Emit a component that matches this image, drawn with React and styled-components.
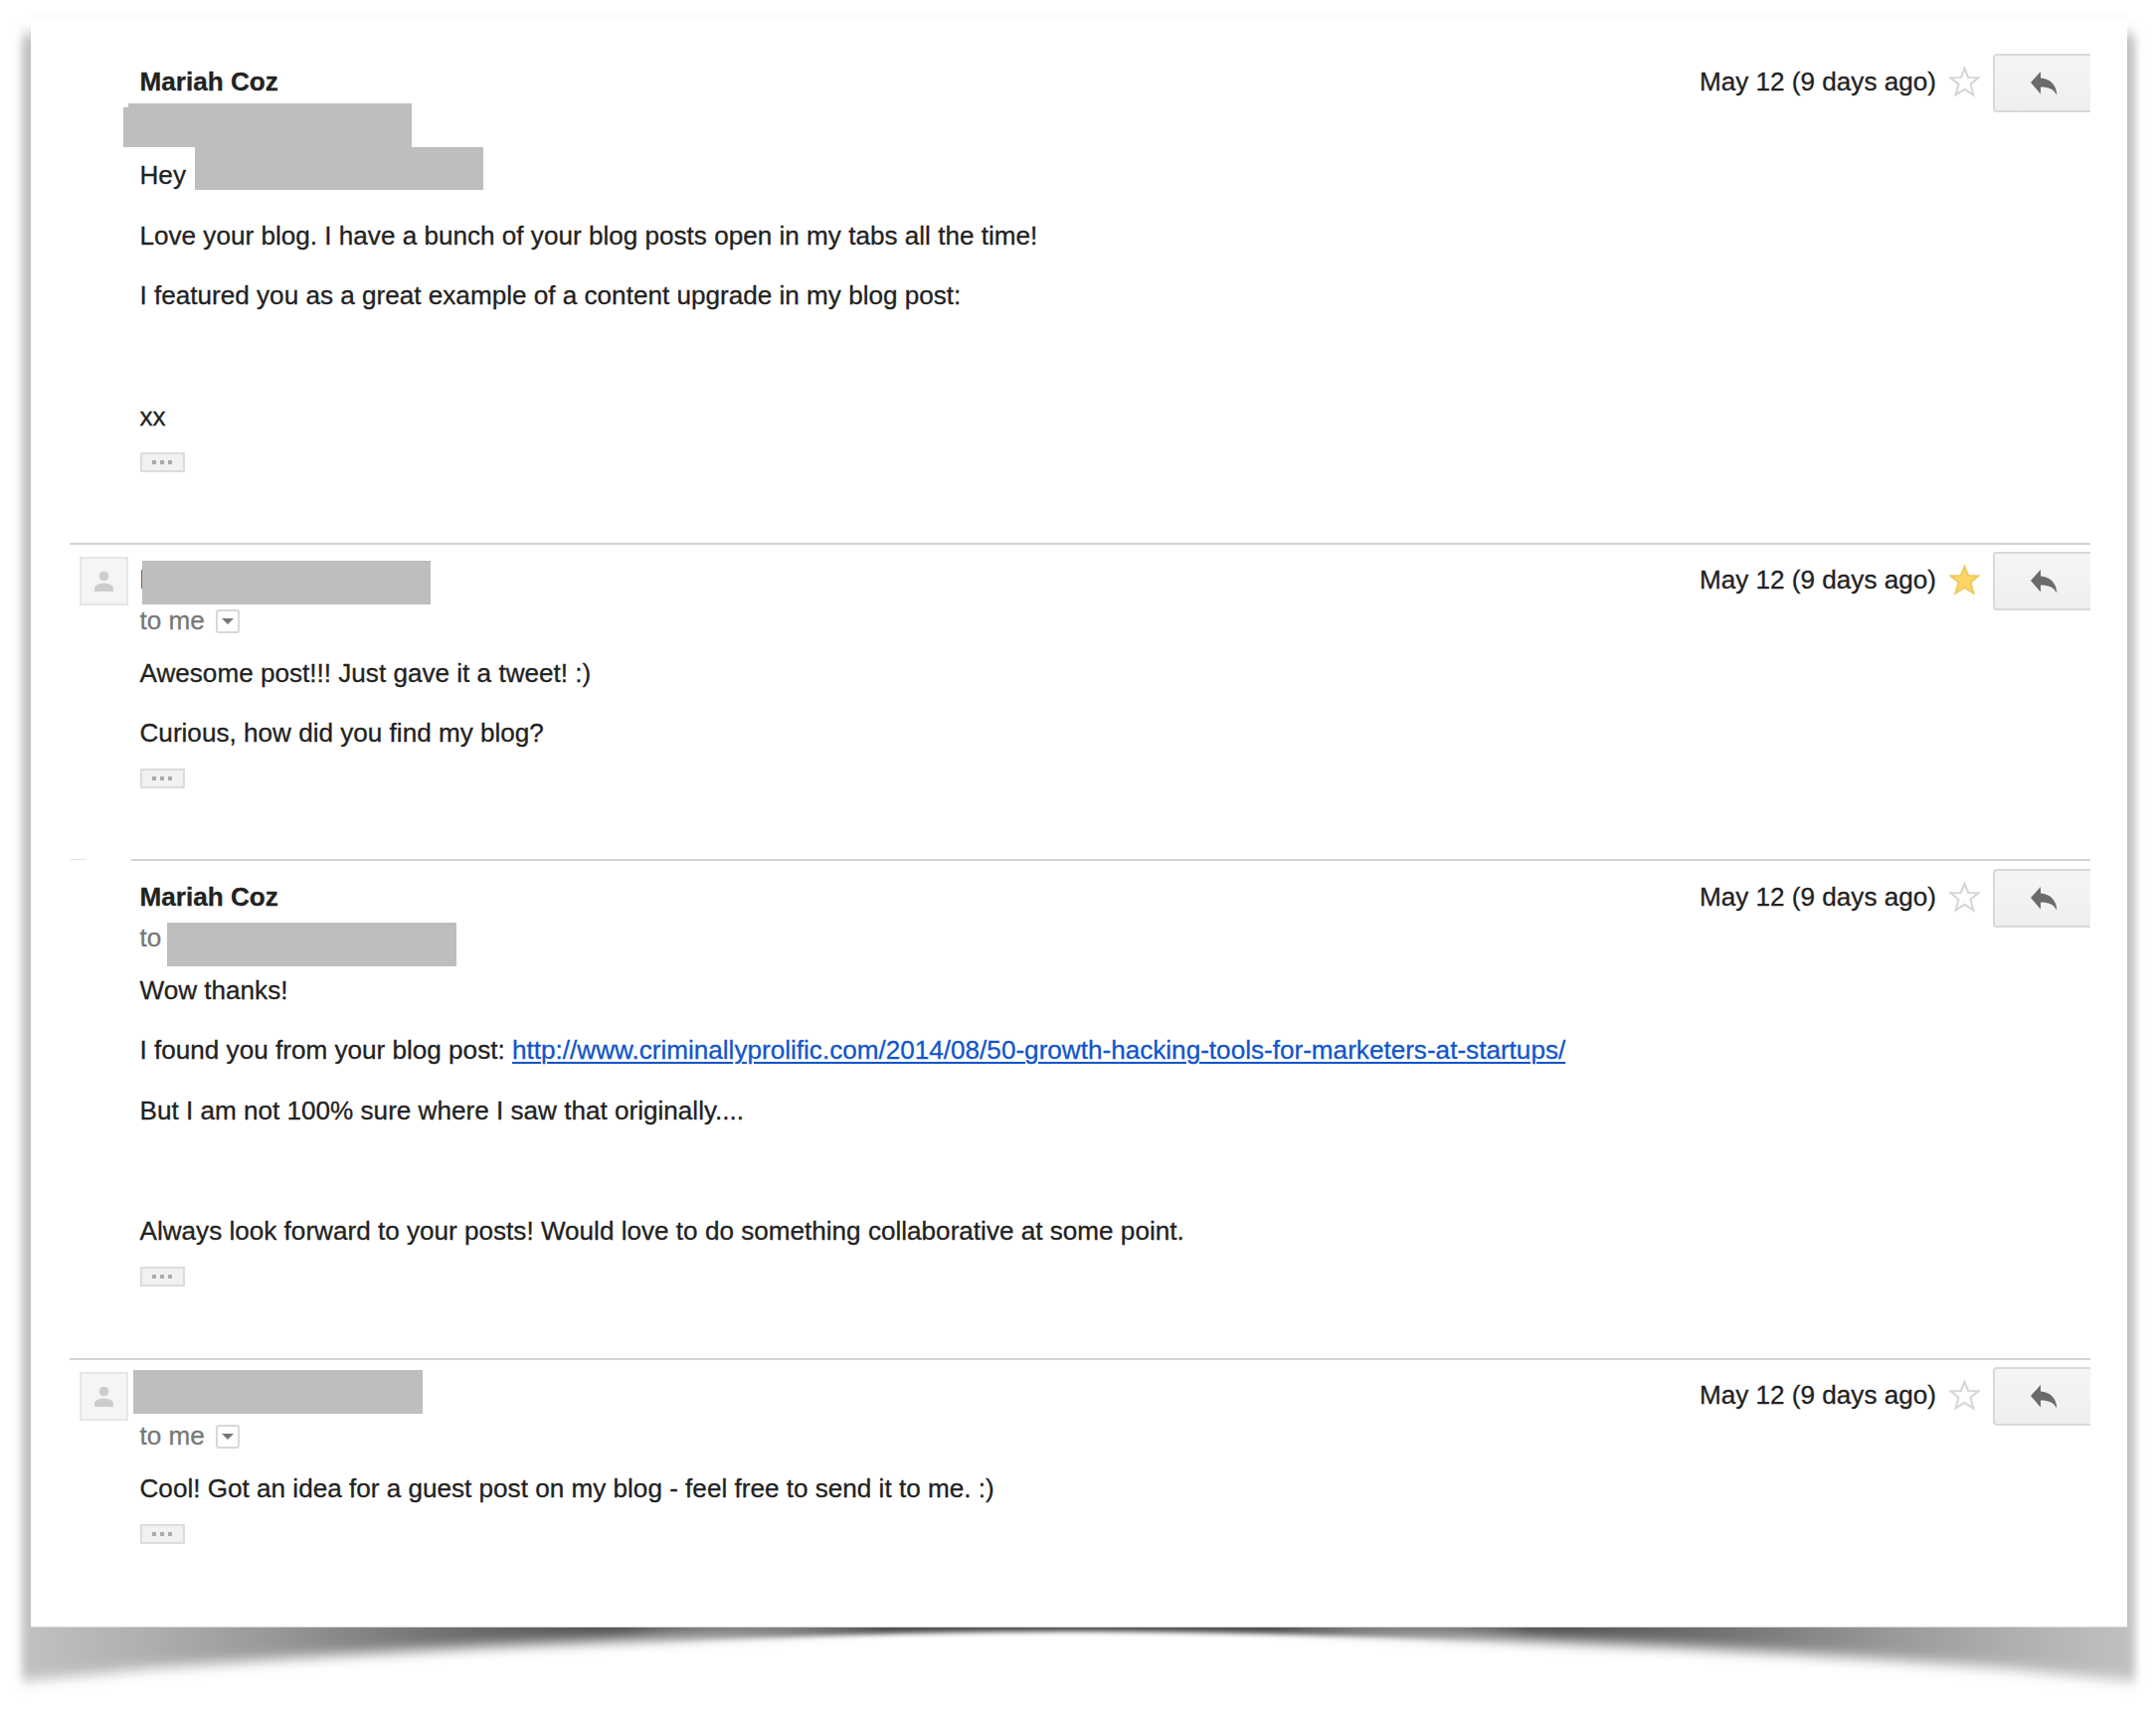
import React from 'react'
import styled, { createGlobalStyle } from 'styled-components'

const GlobalStyle = createGlobalStyle`
  body {
    margin: 0;
    background: #fff;
    font-family: "Liberation Sans", Arial, sans-serif;
    font-size: 26.11px;
    line-height: 30px;
    color: #222;
    -webkit-text-stroke: 0.3px;
  }
`

const Page = styled.div`
  position: relative;
  box-sizing: border-box;
  width: 2168px;
  height: 1724px;
  padding: 13px 29px 0 31px;
  overflow: hidden;
`

const PaperShadow = styled.svg`
  position: absolute;
  top: 0;
  left: 0;
`

const Paper = styled.main`
  position: relative;
  box-sizing: border-box;
  height: 1624px;
  padding: 32px 37px 0 39px;
  border-bottom: 1px solid #d8d8d8;
  background: linear-gradient(#f9f9f9, #fff 8px);
`

const Message = styled.article`
  position: relative;
  display: grid;
  grid-template-columns: 71px 1fr auto;
  box-sizing: border-box;
  height: ${props => props.$height}px;
  padding-top: ${props => props.$shift || 0}px;
`

const Divider = styled.div`
  position: absolute;
  top: 0;
  left: ${props => props.$inset || 0}px;
  right: 0;
  height: 2px;
  background: #d3d3d3;
`

const DividerStub = styled.div`
  position: absolute;
  top: 0;
  left: 0;
  width: 17px;
  height: 1px;
  background: #e3e3e3;
`

const Avatar = styled.div`
  display: flex;
  align-items: center;
  justify-content: center;
  box-sizing: border-box;
  width: 49px;
  height: 49px;
  margin: 14px 0 0 10px;
  border: 2px solid #e6e6e6;
  background: #f5f5f5;
`

const Content = styled.div`
  padding-top: 22px;
  margin-left: -0.5px;
`

const Sender = styled.div`
  height: 41px;
  font-weight: bold;
`

const Recipient = styled.div`
  display: flex;
  align-items: center;
  gap: 11px;
  height: 30px;
  margin-bottom: ${props => props.$gap || 22.6}px;
  color: #777;
`

const Dropdown = styled.span`
  display: flex;
  align-items: center;
  justify-content: center;
  box-sizing: border-box;
  width: 24px;
  height: 24px;
  margin-top: 2px;
  border: 2px solid #d8d8d8;
  border-radius: 3px;
`

const Caret = styled.span`
  border: 6px solid transparent;
  border-top-color: #777;
  border-bottom: 0;
`

const Paragraph = styled.p`
  min-height: 30px;
  margin: 0 0 30.7px;
  white-space: nowrap;

  &:last-of-type {
    margin-bottom: 21px;
  }
`

const Link = styled.a`
  color: #15c;
  text-decoration: underline;
  text-decoration-thickness: 2px;
  text-underline-offset: 3px;
`

const Trimmed = styled.div`
  display: flex;
  align-items: center;
  justify-content: center;
  gap: 4px;
  box-sizing: border-box;
  width: 45px;
  height: 20px;
  border: 2px solid #dcdcdc;
  background: #f1f1f1;
`

const Dot = styled.span`
  width: 4px;
  height: 4px;
  background: #aaa;
`

const Meta = styled.div`
  display: flex;
  align-items: flex-start;
`

const SentDate = styled.span`
  padding-top: 22px;
  margin-right: 13px;
`

const StarIcon = styled.svg`
  margin: 21px 13px 0 0;
`

const ReplyButton = styled.div`
  display: flex;
  align-items: center;
  box-sizing: border-box;
  width: 98px;
  height: 59px;
  margin-top: 9px;
  padding-left: 36px;
  border: 2px solid #d9d9d9;
  border-right: 0;
  border-radius: 4px 0 0 4px;
  background: linear-gradient(#f5f5f5, #efefef);
`

const Redaction = styled.div`
  position: absolute;
  top: ${props => props.$top}px;
  left: ${props => props.$left}px;
  width: ${props => props.$width || 290}px;
  height: ${props => props.$height || 44}px;
  background: #bebebe;
`

const NameEdge = styled.div`
  position: absolute;
  top: 27px;
  left: 72px;
  width: 1px;
  height: 19px;
  background: #a85b20;
`

const Star = ({ filled }) => (
  <StarIcon width="31" height="32" viewBox="0 0 31 32">
    <path
      d="M15.500 3 L19.200 12 L29.200 12.300 L21.500 18.700 L24.400 29.500 L15.500 23.800 L6.600 29.500 L9.500 18.700 L1.800 12.300 L11.800 12 Z"
      fill={filled ? '#fdd663' : '#fff'}
      stroke={filled ? '#edca62' : '#d6d6d6'}
      strokeWidth="2.1"
    />
  </StarIcon>
)

const Reply = () => (
  <ReplyButton>
    <svg width="27" height="24" viewBox="0 0 27 24">
      <path d="M0 11 L10 0 V6.500 C19 7 26 13 26.300 23.500 C23 17.500 18 15.500 10 15.500 V22.500 Z" fill="#6b6b6b" />
    </svg>
  </ReplyButton>
)

const Person = () => (
  <Avatar>
    <svg width="20" height="22" viewBox="0 0 20 22">
      <circle cx="9.500" cy="5.500" r="4.800" fill="#ccc" />
      <path d="M0 21 V18.500 C0 14.500 4.500 12.800 9.500 12.800 S19 14.500 19 18.500 V21 Z" fill="#ccc" />
    </svg>
  </Avatar>
)

const MessageMeta = ({ starred }) => (
  <Meta>
    <SentDate>May 12 (9 days ago)</SentDate>
    <Star filled={starred} />
    <Reply />
  </Meta>
)

const ToMe = () => (
  <Recipient>
    to me
    <Dropdown><Caret /></Dropdown>
  </Recipient>
)

const ShowTrimmed = () => (
  <Trimmed><Dot /><Dot /><Dot /></Trimmed>
)

const sheet = 'M22 34 H2147 V1691 L2019 1678 Q1879 1667 1685 1656 Q1469 1645 1299 1641 Q1188 1638 1084 1638 Q980 1638 870 1641 Q700 1645 484 1656 Q290 1667 150 1678 L22 1691 Z'

// curled-corner shadow: soft towards the corners, tight under the middle of the sheet
const Shadow = () => (
  <PaperShadow width="2168" height="1724" viewBox="0 0 2168 1724">
    <defs>
      <linearGradient id="curl" gradientUnits="userSpaceOnUse" x1="31" y1="0" x2="2139" y2="0">
        <stop offset="0" stopColor="#c0c0c0" />
        <stop offset="0.05" stopColor="#b1b1b1" />
        <stop offset="0.12" stopColor="#969696" />
        <stop offset="0.19" stopColor="#747474" />
        <stop offset="0.27" stopColor="#545454" />
        <stop offset="0.5" stopColor="#4c4c4c" />
        <stop offset="0.73" stopColor="#545454" />
        <stop offset="0.81" stopColor="#747474" />
        <stop offset="0.88" stopColor="#969696" />
        <stop offset="0.95" stopColor="#b1b1b1" />
        <stop offset="1" stopColor="#c0c0c0" />
      </linearGradient>
      <linearGradient id="cornersFade" gradientUnits="userSpaceOnUse" x1="0" y1="0" x2="2168" y2="0">
        <stop offset="0.29" stopColor="#fff" />
        <stop offset="0.41" stopColor="#000" />
        <stop offset="0.59" stopColor="#000" />
        <stop offset="0.71" stopColor="#fff" />
      </linearGradient>
      <linearGradient id="middleFade" gradientUnits="userSpaceOnUse" x1="0" y1="0" x2="2168" y2="0">
        <stop offset="0.29" stopColor="#000" />
        <stop offset="0.41" stopColor="#fff" />
        <stop offset="0.59" stopColor="#fff" />
        <stop offset="0.71" stopColor="#000" />
      </linearGradient>
      <mask id="corners" maskUnits="userSpaceOnUse" x="0" y="0" width="2168" height="1724">
        <rect width="2168" height="1724" fill="url(#cornersFade)" />
      </mask>
      <mask id="middle" maskUnits="userSpaceOnUse" x="0" y="0" width="2168" height="1724">
        <rect width="2168" height="1724" fill="url(#middleFade)" />
      </mask>
      <filter id="soft" filterUnits="userSpaceOnUse" x="0" y="0" width="2168" height="1724" colorInterpolationFilters="sRGB">
        <feGaussianBlur stdDeviation="4.5 7" />
      </filter>
      <filter id="tight" filterUnits="userSpaceOnUse" x="0" y="0" width="2168" height="1724" colorInterpolationFilters="sRGB">
        <feGaussianBlur stdDeviation="2.6" />
      </filter>
    </defs>
    <g mask="url(#corners)">
      <path d={sheet} fill="url(#curl)" filter="url(#soft)" />
    </g>
    <g mask="url(#middle)">
      <path d={sheet} fill="url(#curl)" filter="url(#tight)" transform="translate(0 3)" />
    </g>
  </PaperShadow>
)

export default function App() {
  return (
    <Page>
      <GlobalStyle />
      <Shadow />
      <Paper>
        <Message $height={501}>
          <span />
          <Content>
            <Sender>Mariah Coz</Sender>
            <Recipient $gap={23} />
            <Paragraph>Hey</Paragraph>
            <Paragraph>Love your blog. I have a bunch of your blog posts open in my tabs all the time!</Paragraph>
            <Paragraph>I featured you as a great example of a content upgrade in my blog post:</Paragraph>
            <Paragraph />
            <Paragraph>xx</Paragraph>
            <ShowTrimmed />
          </Content>
          <MessageMeta />
          <Redaction $top={63} $left={54} $height={40} />
          <Redaction $top={59} $left={59} $width={285} />
          <Redaction $top={103} $left={126} $height={43} />
        </Message>

        <Message $height={318}>
          <Divider />
          <Person />
          <Content>
            <Sender />
            <ToMe />
            <Paragraph>Awesome post!!! Just gave it a tweet! :)</Paragraph>
            <Paragraph>Curious, how did you find my blog?</Paragraph>
            <ShowTrimmed />
          </Content>
          <MessageMeta starred />
          <NameEdge />
          <Redaction $top={18} $left={73} />
        </Message>

        <Message $height={502} $shift={1}>
          <DividerStub />
          <Divider $inset={62} />
          <span />
          <Content>
            <Sender>Mariah Coz</Sender>
            <Recipient>to</Recipient>
            <Paragraph>Wow thanks!</Paragraph>
            <Paragraph>
              I found you from your blog post:{' '}
              <Link>http://www.criminallyprolific.com/2014/08/50-growth-hacking-tools-for-marketers-at-startups/</Link>
            </Paragraph>
            <Paragraph>But I am not 100% sure where I saw that originally....</Paragraph>
            <Paragraph />
            <Paragraph>Always look forward to your posts! Would love to do something collaborative at some point.</Paragraph>
            <ShowTrimmed />
          </Content>
          <MessageMeta />
          <Redaction $top={64} $left={98} $width={291} />
        </Message>

        <Message $height={240}>
          <Divider />
          <Person />
          <Content>
            <Sender />
            <ToMe />
            <Paragraph>Cool! Got an idea for a guest post on my blog - feel free to send it to me. :)</Paragraph>
            <ShowTrimmed />
          </Content>
          <MessageMeta />
          <Redaction $top={12} $left={64} $width={291} />
        </Message>
      </Paper>
    </Page>
  )
}
